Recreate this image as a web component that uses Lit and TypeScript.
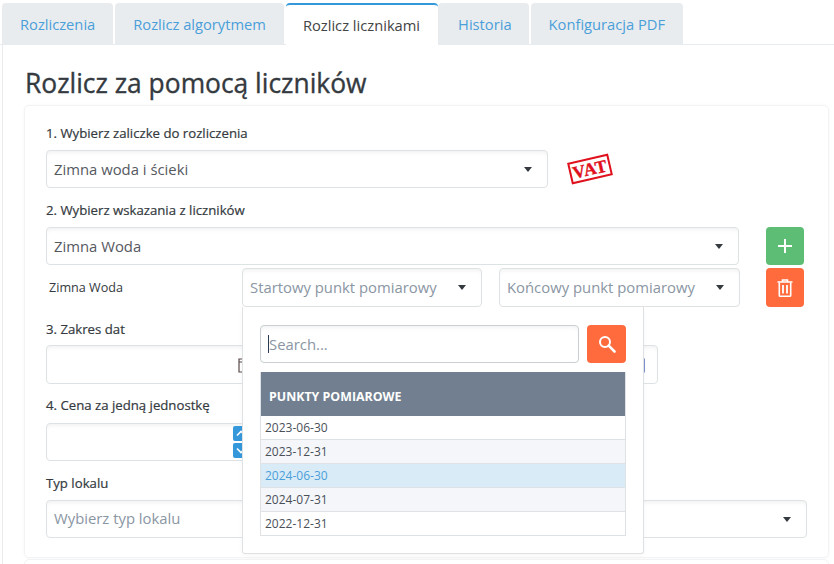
import { LitElement, html, css, svg } from "lit";
import { customElement } from "lit/decorators.js";

const calendar = svg`<svg class="cal" viewBox="0 0 9 17" width="9" height="17"><path d="M1 3h7v13H1zM1 6h7" fill="none" stroke="currentColor" stroke-width="1.2"/></svg>`;

@customElement("app-root")
export class AppRoot extends LitElement {
  static styles = css`
    :host { display: block; width: 834px; height: 564px; overflow: hidden; background: #fff; font-family: "Open Sans", sans-serif; color: #343a40; }
    .tabs { display: flex; padding: 3px 0 0 2px; border-bottom: 1px solid #e9ecef; height: 41px; }
    .tab { display: flex; align-items: center; padding: 0 18px; font-size: 14.7px; color: #4b9fd9; background: #e9ecef; border-radius: 4px 4px 0 0; margin-right: 2px; height: 42px; box-sizing: border-box; white-space: nowrap; }
    .tab.active { background: #fff; color: #444; border-top: 2px solid #3498db; margin: 0; padding: 0 18px 0 17px; }
    .tab:nth-child(4) { padding: 0 17px 0 20px; }
    .panel { margin-left: 2px; border-left: 1px solid #e9ecef; padding-left: 21px; }
    h1 { margin: 0; height: 60px; display: flex; align-items: center; font-size: 26.4px; font-weight: 400; -webkit-text-stroke: .35px #343a40; color: #343a40; padding: 15px 0 0 1px; box-sizing: border-box; line-height: 34px; white-space: nowrap; }
    .card { width: 805px; box-sizing: border-box; border: 1px solid #f1f3f4; border-radius: 5px; padding: 17px 0 19px 21px; box-shadow: 0 0 3px rgba(0,0,0,.04); }
    .card2 { width: 805px; height: 30px; margin-top: 1px; border: 1px solid #f1f3f4; border-radius: 5px; box-sizing: border-box; }
    .label { height: 20px; line-height: 21px; font-size: 13.2px; font-weight: 400; -webkit-text-stroke: .2px #343a40; color: #343a40; }
    .mt12 { margin-top: 12px; } .mt10 { margin-top: 11px; }
    .gap7 { margin-top: 7px; } .gap6 { margin-top: 6px; } .gap8 { margin-top: 8px; }
    .box { display: flex; align-items: center; box-sizing: border-box; height: 38px; border: 1px solid #dde2e4; border-radius: 4px; background: #fff; padding: 0 15px 0 7px; font-size: 14.85px; color: #55595f; box-shadow: inset 0 4px 5px -3px rgba(0,0,0,.07); white-space: nowrap; }
    .box span { flex: 1; }
    .ph { color: #8a96a3; }
    .arrow { width: 0; height: 0; border: 4.5px solid transparent; border-top: 5px solid #343a40; border-bottom: 0; flex: none; }
    .row { display: flex; align-items: center; }
    .w502 { width: 502px; } .w693 { width: 693px; } .w761 { width: 761px; }
    .stamp { margin-left: 21px; width: 42px; height: 22px; box-sizing: border-box; border: 2px solid #e0101c; display: flex; align-items: center; justify-content: center; transform: rotate(-13deg); font-family: "Liberation Serif", serif; font-weight: 700; font-size: 17.5px; letter-spacing: .6px; color: #e0101c; -webkit-text-stroke: .4px #e0101c; }
    .btn { width: 38px; height: 38px; border-radius: 4px; display: flex; align-items: center; justify-content: center; flex: none; }
    .green { background: #5dbd74; margin-left: 27px; }
    .orange { background: #ff6b3d; }
    .meter { margin-top: 3px; align-items: center; }
    .meter-name { width: 196px; padding: 0 0 1px 3px; box-sizing: border-box; font-size: 12.6px; color: #343a40; }
    .pick { position: relative; width: 240px; height: 39px; }
    .pick .box { height: 39px; width: 240px; }
    .pick2 { margin-left: 17px; width: 241px; height: 39px; }
    .lift1 { padding-bottom: 2px; }
    .trash { margin-left: 26px; height: 39px; }
    .dd { position: absolute; z-index: 2; left: 0; top: 39px; width: 402px; height: 247px; box-sizing: border-box; background: #fff; border: 1px solid #dfe2e4; border-top: 0; border-radius: 0 0 3px 3px; padding: 18px 17px 0 17px; box-shadow: 0 2px 4px rgba(0,0,0,.03); }
    .search { display: flex; gap: 8px; }
    .sinput { flex: 1; height: 38px; box-sizing: border-box; display: flex; align-items: center; border: 1px solid #c9cfd2; border-radius: 4px; padding-left: 7px; font-size: 14.85px; color: #8a96a3; box-shadow: inset 0 4px 5px -3px rgba(0,0,0,.07); }
    .caret { width: 1px; height: 18px; background: #2b3a55; }
    .sbtn { width: 39px; height: 38px; }
    .table { margin-top: 9px; width: 366px; border: 1px solid #dfe2e4; border-top: 0; border-bottom: 0; box-sizing: border-box; }
    .thead { height: 44px; background: #717f90; color: #fff; font-size: 12.4px; font-weight: 700; display: flex; align-items: center; padding: 4px 0 0 8px; box-sizing: border-box; }
    .tr { height: 24px; display: flex; align-items: center; padding: 0 0 0 4px; font-size: 12px; color: #4a5058; box-sizing: border-box; border-bottom: 1px solid #dfe2e4; background: #fff; }
    .alt { background: #f4f6fa; }
    .sel { background: #d8ebf6; color: #4b9fd9; }
    .date { width: 612px; height: 39px; padding: 0 12px 0 0; }
    .date .left { width: 200px; display: flex; justify-content: flex-end; flex: none; color: #5b4a4a; }
    .date .right { flex: 1; display: flex; justify-content: flex-end; color: #2b4aa8; }
    .price { width: 210px; position: relative; padding: 0; }
    .spin { position: absolute; left: 186px; width: 16px; height: 15px; background: #3498db; border-radius: 2px; display: flex; align-items: center; justify-content: center; }
    .up { top: 2px; } .down { top: 19px; }
    .lift { padding-bottom: 2px; }
  `;

  render() {
    const tabs = ["Rozliczenia", "Rozlicz algorytmem", "Rozlicz licznikami", "Historia", "Konfiguracja PDF"];
    const rows = [
      ["2023-06-30", ""],
      ["2023-12-31", "alt"],
      ["2024-06-30", "sel"],
      ["2024-07-31", "alt"],
      ["2022-12-31", ""],
    ];
    return html`
      <div class="tabs">
        ${tabs.map((t, i) => html`<div class="tab ${i === 2 ? "active" : ""}">${t}</div>`)}
      </div>
      <div class="panel">
        <h1>Rozlicz za pomocą liczników</h1>
        <div class="card">
          <div class="label">1. Wybierz zaliczke do rozliczenia</div>
          <div class="row gap7">
            <div class="box w502"><span>Zimna woda i ścieki</span><i class="arrow"></i></div>
            <div class="stamp">VAT</div>
          </div>
          <div class="label mt12">2. Wybierz wskazania z liczników</div>
          <div class="row gap7">
            <div class="box w693"><span>Zimna Woda</span><i class="arrow"></i></div>
            <div class="btn green">
              <svg width="14" height="14" viewBox="0 0 14 14"><path d="M7 0v14M0 7h14" stroke="#fff" stroke-width="2"/></svg>
            </div>
          </div>
          <div class="row meter">
            <div class="meter-name">Zimna Woda</div>
            <div class="pick">
              <div class="box"><span class="ph lift1">Startowy punkt pomiarowy</span><i class="arrow"></i></div>
              <div class="dd">
                <div class="search">
                  <div class="sinput"><i class="caret"></i>Search...</div>
                  <div class="btn orange sbtn">
                    <svg width="18" height="18" viewBox="0 0 18 18"><circle cx="7" cy="7" r="5" fill="none" stroke="#fff" stroke-width="2"/><path d="M10.7 10.7L16.5 16.5" stroke="#fff" stroke-width="2.6" stroke-linecap="round"/></svg>
                  </div>
                </div>
                <div class="table">
                  <div class="thead">PUNKTY POMIAROWE</div>
                  ${rows.map(([d, c]) => html`<div class="tr ${c}">${d}</div>`)}
                </div>
              </div>
            </div>
            <div class="box pick2"><span class="ph lift1">Końcowy punkt pomiarowy</span><i class="arrow"></i></div>
            <div class="btn orange trash">
              <svg width="16" height="18" viewBox="0 0 16 18"><path d="M0.5 3h15M5.5 3V1h5v2" fill="none" stroke="#fff" stroke-width="1.6"/><path d="M2.3 3.5v12.7c0 .7.5 1.1 1.1 1.1h9.2c.6 0 1.1-.4 1.1-1.1V3.5" fill="none" stroke="#fff" stroke-width="1.6"/><path d="M6 6v8.5M10 6v8.5" stroke="#fff" stroke-width="1.8"/></svg>
            </div>
          </div>
          <div class="label mt12">3. Zakres dat</div>
          <div class="box date gap6">
            <div class="left">${calendar}</div>
            <div class="right">${calendar}</div>
          </div>
          <div class="label mt10">4. Cena za jedną jednostkę</div>
          <div class="box price gap8">
            <div class="spin up"><svg width="10" height="7" viewBox="0 0 10 7"><path d="M1 5.5l4-4 4 4" fill="none" stroke="#fff" stroke-width="1.6"/></svg></div>
            <div class="spin down"><svg width="10" height="7" viewBox="0 0 10 7"><path d="M1 1.5l4 4 4-4" fill="none" stroke="#fff" stroke-width="1.6"/></svg></div>
          </div>
          <div class="label mt12">Typ lokalu</div>
          <div class="box w761 gap7"><span class="ph lift">Wybierz typ lokalu</span><i class="arrow"></i></div>
        </div>
        <div class="card2"></div>
      </div>
    `;
  }
}
